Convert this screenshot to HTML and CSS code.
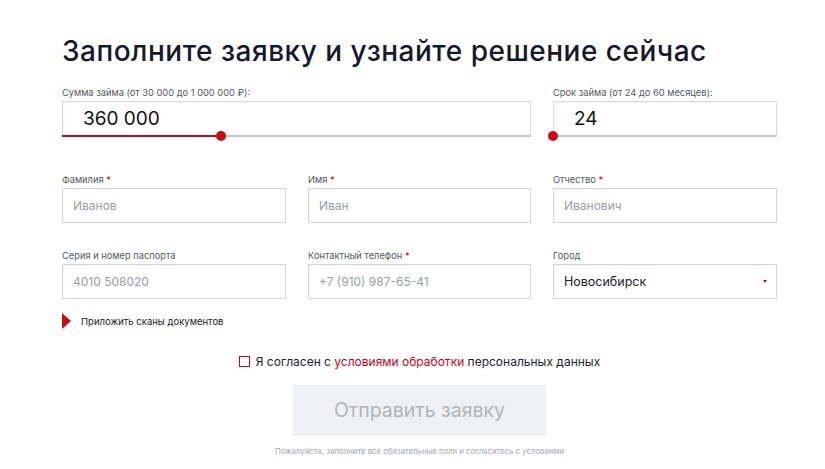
FILE: index.html
```html
<!DOCTYPE html>
<html lang="ru">
<head>
<meta charset="utf-8">
<link rel="stylesheet" href="styles.css">
</head>
<body>
<div class="page">
  <h1 class="title">Заполните заявку и узнайте решение сейчас</h1>
  <div class="grid row-slider">
    <div class="field span2">
      <div class="label">Сумма займа (от 30 000 до 1 000 000 ₽):</div>
      <div class="slider-box">
        <div class="value">360 000</div>
        <div class="track"><div class="fill" style="width:34%"></div><span class="thumb" style="left:34%"></span></div>
      </div>
    </div>
    <div class="field">
      <div class="label">Срок займа (от 24 до 60 месяцев):</div>
      <div class="slider-box">
        <div class="value">24</div>
        <div class="track"><div class="fill" style="width:0%"></div><span class="thumb" style="left:0%"></span></div>
      </div>
    </div>
  </div>
  <div class="grid row-a">
    <div class="field">
      <div class="label">Фамилия <span class="req">*</span></div>
      <div class="input placeholder">Иванов</div>
    </div>
    <div class="field">
      <div class="label">Имя <span class="req">*</span></div>
      <div class="input placeholder">Иван</div>
    </div>
    <div class="field">
      <div class="label">Отчество <span class="req">*</span></div>
      <div class="input placeholder">Иванович</div>
    </div>
  </div>
  <div class="grid row-b">
    <div class="field">
      <div class="label">Серия и номер паспорта</div>
      <div class="input placeholder">4010 508020</div>
    </div>
    <div class="field">
      <div class="label">Контактный телефон <span class="req">*</span></div>
      <div class="input placeholder">+7 (910) 987-65-41</div>
    </div>
    <div class="field">
      <div class="label">Город</div>
      <div class="input select"><span>Новосибирск</span><span class="caret"></span></div>
    </div>
  </div>
  <div class="attach"><span class="tri"></span><span>Приложить сканы документов</span></div>
  <div class="agree"><span class="check"></span><span>Я согласен с <span class="link">условиями обработки</span> персональных данных</span></div>
  <div class="submit-wrap"><div class="submit">Отправить заявку</div></div>
  <div class="note">Пожалуйста, заполните все обязательные поля и согласитесь с условиями</div>
</div>
</body>
</html>
```
FILE: styles.css
```css
* { box-sizing: border-box; }
body {
  margin: 0;
  background: #fff;
  font-family: Inter, "Noto Sans", sans-serif;
  color: #1d2230;
}
.page {
  width: 715px;
  margin-left: 62px;
  padding-top: 33px;
}
.title {
  margin: 0;
  font-size: 28px;
  line-height: 36px;
  font-weight: 500;
  color: #151a28;
  letter-spacing: 0.5px;
}
.grid {
  display: grid;
  grid-template-columns: 224px 223px 224px;
  column-gap: 22px;
}
.row-slider { margin-top: 18px; }
.row-a { margin-top: 37px; }
.row-b { margin-top: 27px; }
.span2 { grid-column: span 2; }
.label {
  font-size: 9.3px;
  line-height: 12px;
  color: #555a60;
  margin-bottom: 2px;
  white-space: nowrap;
}
.req { color: #d0021b; }
.slider-box {
  position: relative;
  height: 36px;
  border: 1px solid #d9dadc;
  border-bottom: none;
  box-shadow: inset 1px 1px 1px rgba(0,0,0,0.04);
}
.value {
  padding-left: 20px;
  font-size: 19px;
  line-height: 33px;
  color: #111;
}
.track {
  position: absolute;
  left: -1px;
  right: -1px;
  bottom: 0;
  height: 2px;
  background: #c3c6ca;
}
.fill {
  height: 2px;
  background: #cc0a14;
}
.thumb {
  position: absolute;
  top: -4px;
  width: 10px;
  height: 10px;
  margin-left: -5px;
  border-radius: 50%;
  background: #cc0a14;
}
.input {
  height: 35px;
  border: 1px solid #d4d6d8;
  padding: 0 10px;
  display: flex;
  align-items: center;
  font-size: 12px;
  box-shadow: inset 1px 1px 1px rgba(0,0,0,0.03);
}
.placeholder { color: #9a9ea3; }
.select {
  color: #1d2230;
  justify-content: space-between;
  padding-right: 9px;
  font-size: 12.5px;
}
.caret {
  width: 0;
  height: 0;
  border-left: 2.5px solid transparent;
  border-right: 2.5px solid transparent;
  border-top: 3px solid #cc0a14;
}
.attach {
  margin-top: 14px;
  display: flex;
  align-items: center;
  gap: 10px;
  font-size: 9.5px;
  color: #222;
}
.tri {
  width: 0;
  height: 0;
  border-top: 8px solid transparent;
  border-bottom: 8px solid transparent;
  border-left: 9px solid #cc0a14;
}
.agree {
  margin-top: 25px;
  display: flex;
  justify-content: center;
  align-items: center;
  gap: 6px;
  font-size: 12px;
  color: #1d2230;
}
.check {
  width: 11px;
  height: 11px;
  border: 1.5px solid #d0021b;
}
.link { color: #d0021b; }
.submit-wrap {
  display: flex;
  justify-content: center;
  margin-top: 16px;
}
.submit {
  width: 253px;
  height: 50px;
  background: #eff0f3;
  border-bottom: 1px solid #e2e4e8;
  color: #b1b4b9;
  font-size: 19.5px;
  display: flex;
  align-items: center;
  justify-content: center;
}
.note {
  margin-top: 11px;
  text-align: center;
  font-size: 7.8px;
  color: #a5a8ad;
}
```
